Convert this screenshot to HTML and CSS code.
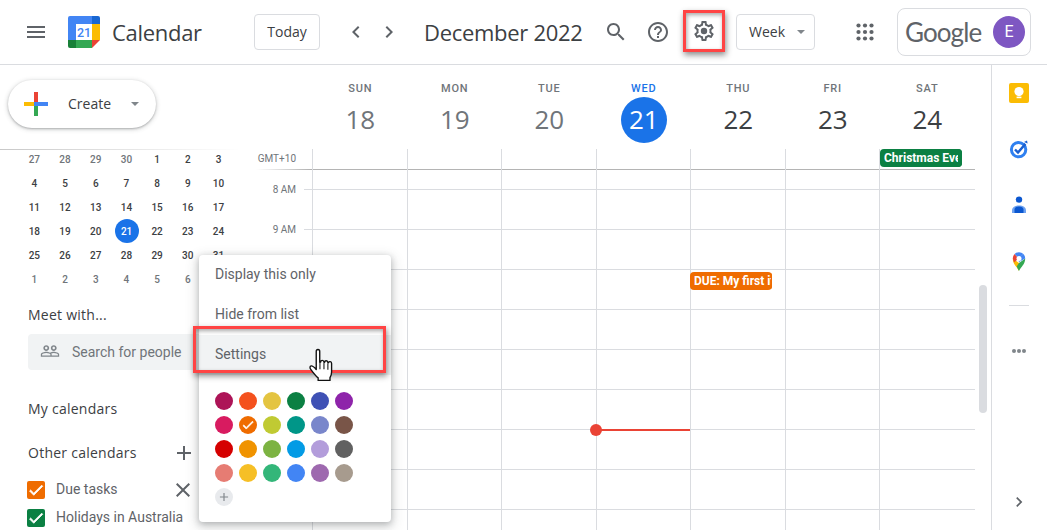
FILE: index.html
```html
<!DOCTYPE html>
<html lang="en">
<head>
<meta charset="utf-8">
<title>Calendar</title>
<link rel="stylesheet" href="styles.css">
</head>
<body>
<svg class="sprite" aria-hidden="true">
  <symbol id="i-menu" viewBox="0 0 24 24"><path d="M3 18h18v-2H3v2zm0-5h18v-2H3v2zm0-7v2h18V6H3z"/></symbol>
  <symbol id="i-left" viewBox="0 0 24 24"><path d="M15.41 7.41L14 6l-6 6 6 6 1.41-1.41L10.83 12z"/></symbol>
  <symbol id="i-right" viewBox="0 0 24 24"><path d="M10 6L8.59 7.41 13.17 12l-4.58 4.59L10 18l6-6z"/></symbol>
  <symbol id="i-search" viewBox="0 0 24 24"><path d="M15.5 14h-.79l-.28-.27C15.41 12.59 16 11.11 16 9.5 16 5.91 13.09 3 9.5 3S3 5.91 3 9.5 5.91 16 9.5 16c1.61 0 3.09-.59 4.23-1.57l.27.28v.79l5 4.99L20.49 19l-4.99-5zm-6 0C7.01 14 5 11.99 5 9.5S7.01 5 9.5 5 14 7.01 14 9.5 11.99 14 9.5 14z"/></symbol>
  <symbol id="i-help" viewBox="0 0 24 24"><path d="M11 18h2v-2h-2v2zm1-16C6.48 2 2 6.48 2 12s4.48 10 10 10 10-4.48 10-10S17.52 2 12 2zm0 18c-4.41 0-8-3.59-8-8s3.59-8 8-8 8 3.59 8 8-3.59 8-8 8zm0-14c-2.21 0-4 1.79-4 4h2c0-1.1.9-2 2-2s2 .9 2 2c0 2-3 1.75-3 5h2c0-2.25 3-2.5 3-5 0-2.21-1.79-4-4-4z"/></symbol>
  <symbol id="i-gear" viewBox="0 0 24 24"><path d="M19.43 12.98c.04-.32.07-.64.07-.98 0-.34-.03-.66-.07-.98l2.11-1.65c.19-.15.24-.42.12-.64l-2-3.46c-.09-.16-.26-.25-.44-.25-.06 0-.12.01-.17.03l-2.49 1c-.52-.4-1.08-.73-1.69-.98l-.38-2.65C14.46 2.18 14.25 2 14 2h-4c-.25 0-.46.18-.49.42l-.38 2.65c-.61.25-1.17.59-1.69.98l-2.49-1c-.06-.02-.12-.03-.18-.03-.17 0-.34.09-.43.25l-2 3.46c-.13.22-.07.49.12.64l2.11 1.65c-.04.32-.07.65-.07.98 0 .33.03.66.07.98l-2.11 1.65c-.19.15-.24.42-.12.64l2 3.46c.09.16.26.25.44.25.06 0 .12-.01.17-.03l2.49-1c.52.4 1.08.73 1.69.98l.38 2.65c.03.24.24.42.49.42h4c.25 0 .46-.18.49-.42l.38-2.65c.61-.25 1.17-.59 1.69-.98l2.49 1c.06.02.12.03.18.03.17 0 .34-.09.43-.25l2-3.46c.12-.22.07-.49-.12-.64l-2.11-1.65zm-1.98-1.71c.04.31.05.52.05.73 0 .21-.02.43-.05.73l-.14 1.13.89.7 1.08.84-.7 1.21-1.27-.51-1.04-.42-.9.68c-.43.32-.84.56-1.25.73l-1.06.43-.16 1.13-.2 1.35h-1.4l-.19-1.35-.16-1.13-1.06-.43c-.43-.18-.83-.41-1.23-.71l-.91-.7-1.06.43-1.27.51-.7-1.21 1.08-.84.89-.7-.14-1.13c-.03-.31-.05-.54-.05-.74s.02-.43.05-.73l.14-1.13-.89-.7-1.08-.84.7-1.21 1.27.51 1.04.42.9-.68c.43-.32.84-.56 1.25-.73l1.06-.43.16-1.13.2-1.35h1.39l.19 1.35.16 1.13 1.06.43c.43.18.83.41 1.23.71l.91.7 1.06-.43 1.27-.51.7 1.21-1.07.85-.89.7.14 1.13z"/><circle cx="12" cy="12" r="3.2"/></symbol>
  <symbol id="i-apps" viewBox="0 0 24 24"><circle cx="5.5" cy="5.5" r="2.1"/><circle cx="12" cy="5.5" r="2.1"/><circle cx="18.5" cy="5.5" r="2.1"/><circle cx="5.5" cy="12" r="2.1"/><circle cx="12" cy="12" r="2.1"/><circle cx="18.5" cy="12" r="2.1"/><circle cx="5.5" cy="18.5" r="2.1"/><circle cx="12" cy="18.5" r="2.1"/><circle cx="18.5" cy="18.5" r="2.1"/></symbol>
  <symbol id="i-people" viewBox="0 0 24 24"><path fill-rule="evenodd" d="M16.5 13c-1.2 0-3.07.34-4.5 1-1.43-.67-3.3-1-4.5-1C5.33 13 1 14.08 1 16.25V19h22v-2.75c0-2.17-4.33-3.25-6.5-3.25zm-4 4.5h-10v-1.25c0-.54 2.56-1.75 5-1.75s5 1.21 5 1.75v1.25zm9 0H14v-1.25c0-.46-.2-.86-.52-1.22.88-.3 1.96-.53 3.02-.53 2.44 0 5 1.21 5 1.75v1.25zM7.5 12c1.93 0 3.5-1.57 3.5-3.5S9.43 5 7.5 5 4 6.57 4 8.5 5.57 12 7.5 12zm0-5c.83 0 1.5.67 1.5 1.5S8.33 10 7.5 10 6 9.33 6 8.5 6.67 7 7.5 7zm9 5c1.93 0 3.5-1.57 3.5-3.5S18.43 5 16.5 5 13 6.57 13 8.5s1.57 3.5 3.5 3.5zm0-5c.83 0 1.5.67 1.5 1.5s-.67 1.5-1.5 1.5-1.5-.67-1.5-1.5.67-1.5 1.5-1.5z"/></symbol>
  <symbol id="i-plus" viewBox="0 0 24 24"><path d="M19 13h-6v6h-2v-6H5v-2h6V5h2v6h6v2z"/></symbol>
  <symbol id="i-close" viewBox="0 0 24 24"><path d="M19 6.41L17.59 5 12 10.59 6.41 5 5 6.41 10.59 12 5 17.59 6.41 19 12 13.41 17.59 19 19 17.59 13.41 12z"/></symbol>
  <symbol id="i-check" viewBox="0 0 24 24"><path d="M9 16.17L4.83 12l-1.42 1.41L9 19 21 7l-1.41-1.41z"/></symbol>
</svg>

<div class="app">
  <header class="topbar">
    <div class="brand">
      <svg class="icon"><use href="#i-menu"/></svg>
      <svg class="logo" viewBox="0 0 32 32">
        <path fill="#4285f4" d="M2 0h22v8H8v16H0V2a2 2 0 0 1 2-2z"/>
        <path fill="#1967d2" d="M24 0h6a2 2 0 0 1 2 2v6h-8z"/>
        <path fill="#fbbc04" d="M24 8h8v16h-8z"/>
        <path fill="#34a853" d="M8 24h16v8H8z"/>
        <path fill="#188038" d="M0 24h8v8H2a2 2 0 0 1-2-2z"/>
        <path fill="#ea4335" d="M24 24h8l-8 8z"/>
        <rect x="8" y="8" width="16" height="16" fill="#fff"/>
        <text x="16" y="21" text-anchor="middle" class="logo-num">21</text>
      </svg>
      <span class="product">Calendar</span>
    </div>
    <button class="btn today">Today</button>
    <div class="nav">
      <svg class="icon"><use href="#i-left"/></svg>
      <svg class="icon"><use href="#i-right"/></svg>
    </div>
    <div class="date">December 2022</div>
    <div class="tools">
      <svg class="icon"><use href="#i-search"/></svg>
      <svg class="icon"><use href="#i-help"/></svg>
      <svg class="icon gear"><use href="#i-gear"/></svg>
    </div>
    <button class="btn week">Week<span class="caret"></span></button>
    <svg class="icon apps"><use href="#i-apps"/></svg>
    <div class="account">
      <span class="wordmark">Google</span>
      <span class="avatar">E</span>
    </div>
  </header>

  <main class="main">
    <aside class="sidebar">
      <div class="create-zone">
        <button class="create">
          <svg class="create-plus" viewBox="0 0 24 24">
            <path fill="#ea4335" d="M10 0h4v10h-4z"/>
            <path fill="#fbbc04" d="M0 10h10v4H0z"/>
            <path fill="#34a853" d="M10 14h4v10h-4z"/>
            <path fill="#4285f4" d="M10 10h14v4H10z"/>
          </svg>
          <span class="create-label">Create</span>
          <span class="caret"></span>
        </button>
      </div>
      <div class="side-scroll">
        <div class="mini">
          <span class="off">27</span><span class="off">28</span><span class="off">29</span><span class="off">30</span><span>1</span><span>2</span><span>3</span>
          <span>4</span><span>5</span><span>6</span><span>7</span><span>8</span><span>9</span><span>10</span>
          <span>11</span><span>12</span><span>13</span><span>14</span><span>15</span><span>16</span><span>17</span>
          <span>18</span><span>19</span><span>20</span><span class="mini-today">21</span><span>22</span><span>23</span><span>24</span>
          <span>25</span><span>26</span><span>27</span><span>28</span><span>29</span><span>30</span><span>31</span>
          <span class="off">1</span><span class="off">2</span><span class="off">3</span><span class="off">4</span><span class="off">5</span><span class="off">6</span><span class="off">7</span>
        </div>
        <div class="side-title meet">Meet with...</div>
        <div class="people-search">
          <svg class="icon people"><use href="#i-people"/></svg>
          <span>Search for people</span>
        </div>
        <div class="side-title mine">My calendars</div>
        <div class="side-title other">Other calendars<svg class="icon side-plus"><use href="#i-plus"/></svg></div>
        <div class="cal-row due">
          <span class="check check-orange"><svg><use href="#i-check"/></svg></span>
          <span class="cal-name">Due tasks</span>
          <svg class="icon side-x"><use href="#i-close"/></svg>
        </div>
        <div class="cal-row">
          <span class="check check-green"><svg><use href="#i-check"/></svg></span>
          <span class="cal-name">Holidays in Australia</span>
        </div>
      </div>
    </aside>

    <section class="calendar">
      <div class="days">
        <div class="day past"><span class="dow">SUN</span><span class="num">18</span></div>
        <div class="day past"><span class="dow">MON</span><span class="num">19</span></div>
        <div class="day past"><span class="dow">TUE</span><span class="num">20</span></div>
        <div class="day now"><span class="dow">WED</span><span class="num">21</span></div>
        <div class="day"><span class="dow">THU</span><span class="num">22</span></div>
        <div class="day"><span class="dow">FRI</span><span class="num">23</span></div>
        <div class="day"><span class="dow">SAT</span><span class="num">24</span></div>
      </div>
      <div class="grid-wrap">
        <div class="gutter">
          <div class="tz">GMT+10</div>
          <div class="hour">8 AM</div>
          <div class="hour">9 AM</div>
        </div>
        <div class="cols">
          <div class="col"></div>
          <div class="col"></div>
          <div class="col"></div>
          <div class="col"><span class="now-dot"></span><span class="now-line"></span></div>
          <div class="col"><span class="event event-due">DUE: My first item</span></div>
          <div class="col"></div>
          <div class="col"><span class="event event-xmas">Christmas Eve</span></div>
        </div>
        <div class="track"><div class="thumb"></div></div>
      </div>
    </section>

    <nav class="panel">
      <svg class="app-icon" viewBox="0 0 20 20">
        <rect width="20" height="20" rx="2" fill="#fbbc04"/>
        <circle cx="10" cy="8.6" r="4.6" fill="#fff"/>
        <rect x="7.6" y="13.6" width="4.8" height="1.6" fill="#fff"/>
      </svg>
      <svg class="app-icon" viewBox="0 0 20 20">
        <circle cx="9.6" cy="10.6" r="7.2" fill="none" stroke="#2f80f0" stroke-width="3"/>
        <path d="M6 10.5l3 3 7.4-8.6" fill="none" stroke="#1a5fd0" stroke-width="2.4"/>
        <path d="M15 3l3-1.4.6 3z" fill="#1a5fd0"/>
      </svg>
      <svg class="app-icon" viewBox="0 0 20 20">
        <circle cx="10" cy="4.6" r="3.2" fill="#0b57d0"/>
        <path d="M3 18v-2.4C3 12 6 10.4 10 10.4s7 1.6 7 5.200V18z" fill="#6ea2f0"/>
        <path d="M5.500 18v-3.600c0-1.900 2-3 4.500-3s4.500 1.100 4.500 3V18z" fill="#0b57d0"/>
      </svg>
      <svg class="app-icon" viewBox="0 0 20 20">
        <path d="M10 20C8 15.500 3.800 13.500 3.800 7.500L10 12z" fill="#fbbc04"/>
        <path d="M10 20c2-4.500 6.200-6.500 6.200-12.500L10 12l-2.300 3.600z" fill="#34a853"/>
        <path d="M3.800 7.500A6.200 6.200 0 0 1 5.600 3l4 4.500L5 11.500z" fill="#ea4335"/>
        <path d="M5.600 3A6.200 6.200 0 0 1 14.400 3L10 7.500z" fill="#4285f4"/>
        <path d="M14.400 3a6.200 6.200 0 0 1 1.800 4.500L10 11 9 8z" fill="#4285f4"/>
        <circle cx="10" cy="7.400" r="2.500" fill="#fff"/>
      </svg>
      <span class="panel-rule"></span>
      <span class="panel-dots"><i></i><i></i><i></i></span>
      <svg class="icon panel-next"><use href="#i-right"/></svg>
    </nav>
  </main>

  <div class="popup">
    <div class="popup-item">Display this only</div>
    <div class="popup-item">Hide from list</div>
    <div class="popup-item hot">Settings</div>
    <div class="swatches">
      <i class="sw c1"></i><i class="sw c2"></i><i class="sw c3"></i><i class="sw c4"></i><i class="sw c5"></i><i class="sw c6"></i>
      <i class="sw c7"></i><i class="sw c8"><svg><use href="#i-check"/></svg></i><i class="sw c9"></i><i class="sw c10"></i><i class="sw c11"></i><i class="sw c12"></i>
      <i class="sw c13"></i><i class="sw c14"></i><i class="sw c15"></i><i class="sw c16"></i><i class="sw c17"></i><i class="sw c18"></i>
      <i class="sw c19"></i><i class="sw c20"></i><i class="sw c21"></i><i class="sw c22"></i><i class="sw c23"></i><i class="sw c24"></i>
      <i class="sw sw-add"><svg><use href="#i-plus"/></svg></i>
    </div>
  </div>

  <div class="mark mark-gear"></div>
  <div class="mark mark-settings"></div>

  <svg class="hand" viewBox="0 0 26 34">
    <path d="M8.500 3.200c0-2.400 3.300-2.400 3.300 0v10.300l.9-.2c0-2.200 3-2.200 3.100.1l.6.100c.1-2 3-1.900 3.100.2l.6.200c.3-1.600 2.900-1.300 2.900.7v8c0 2.300-.6 3.800-1.500 5.400v2.600H10.300v-2.400c-2-1.500-4-4-6.800-7.800-1.500-2-1-3.300.3-3.500 1.500-.200 3 1.500 4.700 3.400z" fill="#fff" stroke="#111" stroke-width="1.300" stroke-linejoin="round"/>
    <path d="M12 14v6M15.800 14v6M19.500 14.500v6" fill="none" stroke="#111" stroke-width="1"/>
  </svg>
</div>
</body>
</html>
```
FILE: styles.css
```css
* { box-sizing: border-box; }
html, body { margin: 0; padding: 0; background: #fff; }
body { font-family: Roboto, "Liberation Sans", sans-serif; color: #3c4043; }
.sprite { display: none; }
.app { position: relative; width: 1047px; height: 530px; overflow: hidden; display: flex; flex-direction: column; }
.icon { width: 24px; height: 24px; fill: #5f6368; flex: none; display: block; }

/* top bar */
.topbar { flex: none; height: 65px; border-bottom: 1px solid #dadce0; display: flex; align-items: center; padding-left: 24px; }
.brand { width: 230px; display: flex; align-items: center; }
.logo { width: 32px; height: 32px; margin-left: 20px; flex: none; }
.logo-num { font: 500 12.5px Roboto, sans-serif; fill: #4285f4; }
.product { margin-left: 12px; font: 400 22px/28px "Open Sans", sans-serif; color: #3c4043; letter-spacing: -0.3px; }
.btn { height: 36px; background: #fff; border: 1px solid #dadce0; border-radius: 4px; font: 500 14px "Open Sans", sans-serif; color: #3c4043; padding: 0 0 2px; }
.today { width: 66px; }
.nav { display: flex; gap: 9px; margin-left: 24px; }
.date { width: 180px; margin-left: 23px; font: 400 22px/28px "Open Sans", sans-serif; color: #3c4043; letter-spacing: -0.3px; }
.tools { display: flex; gap: 18px; }
.gear { margin-left: 4px; margin-top: -1px; }
.week { width: 79px; margin-left: 20px; display: flex; align-items: center; padding-left: 12px; }
.caret { width: 0; height: 0; border: 4.5px solid transparent; border-top-color: #80868b; border-bottom-width: 0; display: block; flex: none; }
.week .caret { margin-left: 12px; margin-top: 2px; }
.apps { margin-left: 38px; }
.account { margin-left: 20px; width: 134px; height: 48px; border: 1px solid #dadce0; border-radius: 8px; display: flex; align-items: center; padding-left: 7px; }
.wordmark { width: 88px; font: 400 26px/34px Lato, sans-serif; color: #5f6368; letter-spacing: -0.9px; }
.avatar { width: 32px; height: 32px; border-radius: 50%; background: #7e57c2; color: #fff; font: 400 16px/32px Roboto, sans-serif; text-align: center; flex: none; }

/* main */
.main { flex: 1; min-height: 0; display: flex; }
.sidebar { width: 256px; flex: none; display: flex; flex-direction: column; }
.create-zone { height: 84px; flex: none; padding: 15px 0 0 8px; }
.create { width: 148px; height: 48px; border: 0; border-radius: 24px; background: #fff; box-shadow: 0 1px 2px rgba(60,64,67,.3), 0 1px 4px 1px rgba(60,64,67,.18); display: flex; align-items: center; padding: 0 0 0 16px; font: 500 14px "Open Sans", sans-serif; color: #3c4043; }
.create-plus { width: 24px; height: 24px; flex: none; }
.create-label { margin-left: 20px; width: 46px; text-align: left; padding-bottom: 2px; }
.create .caret { margin-left: 17px; }
.side-scroll { flex: 1; min-height: 0; overflow: hidden; background: linear-gradient(to right, #c8c8c8, #fff 240px) 0 0 / 100% 1px no-repeat; }
.mini { margin-top: -2px; padding-left: 19px; display: grid; grid-template-columns: repeat(7, 30.7px); grid-auto-rows: 24px; font-size: 10px; font-weight: 500; color: #3c4043; }
.mini span { display: flex; align-items: center; justify-content: center; }
.mini .off { color: #70757a; }
.mini .mini-today { width: 24px; height: 24px; margin-left: 3.500px; border-radius: 50%; background: #1a73e8; color: #fff; }
.side-title { height: 20px; padding-left: 28px; font: 500 14px/20px "Open Sans", sans-serif; color: #3c4043; letter-spacing: .25px; }
.meet { margin-top: 14px; }
.people-search { margin: 9px 0 0 28px; width: 210px; height: 36px; border-radius: 4px; background: #f1f3f4; display: flex; align-items: center; padding-left: 12px; font-size: 14px; color: #70757a; }
.people { width: 20px; height: 20px; fill: #80868b; margin: -3px 12px 0 0; }
.mine { margin-top: 29px; }
.other { margin-top: 24px; display: flex; align-items: center; width: 196px; }
.side-plus { margin-left: auto; }
.cal-row { height: 28px; width: 195px; display: flex; align-items: center; padding-left: 27px; }
.due { margin-top: 13px; }
.check { width: 18px; height: 18px; border-radius: 2px; display: block; flex: none; }
.check svg { display: block; width: 18px; height: 18px; fill: #fff; stroke: #fff; stroke-width: 1; }
.check-orange { background: #ef6c00; }
.check-green { background: #0b8043; }
.cal-name { margin: -2px 0 0 11px; font-size: 14px; line-height: 18px; color: #5f6368; white-space: nowrap; }
.side-x { margin-left: auto; }

/* calendar */
.calendar { width: 735px; flex: none; display: flex; flex-direction: column; }
.days { height: 84px; flex: none; padding-left: 57px; display: grid; grid-template-columns: repeat(7, 94.5px); }
.day { display: flex; flex-direction: column; align-items: center; padding-top: 16px; color: #3c4043; }
.dow { font-size: 11px; font-weight: 500; line-height: 16px; letter-spacing: .8px; color: #70757a; }
.num { width: 46px; height: 46px; border-radius: 50%; text-align: center; font: 400 26px/44px "Open Sans", sans-serif; }
.past .num { color: #70757a; }
.now .dow { color: #1a73e8; }
.now .num { background: #1a73e8; color: #fff; }
.grid-wrap { flex: 1; min-height: 0; display: flex; }
.gutter { width: 56px; flex: none; }
.tz { height: 21px; margin-bottom: -1px; padding: 4px 16px 0 0; text-align: right; font-size: 10px; line-height: 12px; color: #70757a; background: linear-gradient(to right, #fff, #b0b0b0) 0 20px / 100% 1px no-repeat; }
.hour { height: 40px; padding-right: 16px; text-align: right; font-size: 10px; line-height: 42px; color: #70757a; background: linear-gradient(#dadce0, #dadce0) right 0 top 20px / 8px 1px no-repeat; }
.cols { width: 663px; flex: none; display: grid; grid-template-columns: repeat(7, 94.5px);
  background:
    linear-gradient(#b4b4b4, #b4b4b4) 0 20px / 100% 1px no-repeat,
    repeating-linear-gradient(#dadce0 0 1px, transparent 1px 40px) 0 40px / 100% 400px no-repeat; }
.col { position: relative; border-left: 1px solid #dadce0; }
.event { position: absolute; width: 82px; height: 18px; border-radius: 4px; padding-left: 4px; font-size: 12px; font-weight: 700; line-height: 18px; color: #fff; white-space: nowrap; overflow: hidden; }
.event::after { content: ""; position: absolute; right: 0; top: 0; height: 18px; background: inherit; }
.event-xmas { left: 0; top: 0; background: #0b8043; }
.event-xmas::after { width: 4px; }
.event-due { left: -1px; top: 123px; background: #ef6c00; }
.event-due::after { width: 1px; }
.now-dot { position: absolute; left: -7px; top: 275px; width: 12px; height: 12px; border-radius: 50%; background: #ea4335; }
.now-line { position: absolute; left: -1px; top: 280px; width: 95px; height: 2px; background: #ea4335; }
.track { width: 16px; flex: none; padding: 136px 0 0 4px; }
.thumb { width: 8px; height: 128px; border-radius: 4px; background: #dadce0; }

/* right panel */
.panel { width: 56px; flex: none; border-left: 1px solid #dadce0; display: flex; flex-direction: column; align-items: center; padding: 18px 1px 18px 0; }
.app-icon { width: 20px; height: 20px; flex: none; margin-bottom: 36px; }
.app-icon:nth-child(4) { margin-bottom: 0; }
.panel-rule { width: 20px; height: 1px; background: #dadce0; margin-top: 34px; flex: none; }
.panel-dots { margin-top: 43px; display: flex; gap: 1px; }
.panel-dots i { width: 4px; height: 4px; border-radius: 50%; background: #80868b; display: block; }
.panel-next { margin-top: auto; width: 20px; height: 20px; }

/* context menu */
.popup { position: absolute; left: 199px; top: 255px; width: 192px; height: 267px; background: #fff; border-radius: 4px; box-shadow: 0 2px 6px rgba(60,64,67,.3), 0 4px 12px 3px rgba(60,64,67,.15); }
.popup-item { height: 40px; padding-left: 16px; font-size: 14px; line-height: 38px; color: #5f6368; }
.hot { background: #f1f3f4; }
.swatches { margin: 17px 0 0 16px; display: grid; grid-template-columns: repeat(6, 18px); gap: 6px; }
.sw { width: 18px; height: 18px; border-radius: 50%; display: block; }
.sw svg { display: block; width: 14px; height: 14px; margin: 2px; fill: #fff; stroke: #fff; stroke-width: 1.2; }
.c1 { background: #ad1457; } .c2 { background: #f4511e; } .c3 { background: #e4c441; } .c4 { background: #0b8043; } .c5 { background: #3f51b5; } .c6 { background: #8e24aa; }
.c7 { background: #d81b60; } .c8 { background: #ef6c00; } .c9 { background: #c0ca33; } .c10 { background: #009688; } .c11 { background: #7986cb; } .c12 { background: #795548; }
.c13 { background: #d50000; } .c14 { background: #f09300; } .c15 { background: #7cb342; } .c16 { background: #039be5; } .c17 { background: #b39ddb; } .c18 { background: #616161; }
.c19 { background: #e67c73; } .c20 { background: #f6bf26; } .c21 { background: #33b679; } .c22 { background: #4285f4; } .c23 { background: #9e69af; } .c24 { background: #a79b8e; }
.sw-add { background: #e8eaed; }
.sw-add svg { fill: #80868b; stroke: none; }

/* annotations */
.mark { position: absolute; border: 3px solid #f44; box-shadow: 1px 3px 6px rgba(0,0,0,.45), inset 1px 2px 4px rgba(0,0,0,.35); }
.mark-gear { left: 683px; top: 10px; width: 42px; height: 42px; }
.mark-settings { left: 193px; top: 326px; width: 193px; height: 47px; }
.hand { position: absolute; left: 307px; top: 348px; width: 28px; height: 36px; }
```
